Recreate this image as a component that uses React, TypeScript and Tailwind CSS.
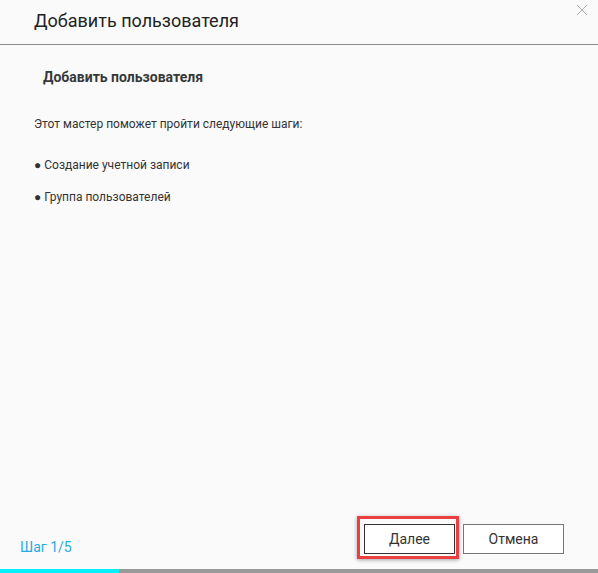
import React from 'react';

const steps = ['Создание учетной записи', 'Группа пользователей'];

const App: React.FC = () => {
  return (
    <div
      className="w-[598px] h-[573px] bg-[#fafafa] flex flex-col text-[#333] overflow-hidden"
      style={{ fontFamily: 'Roboto, "Liberation Sans", sans-serif' }}
    >
      <div className="relative h-[45px] border-b border-[#8c8c8c] flex items-center pl-[34px] shrink-0">
        <h1 className="text-[18px] leading-[24px] text-[#222] font-normal mt-[-2px]">Добавить пользователя</h1>
        <button className="absolute right-[10px] top-[4px] w-[12px] h-[12px] text-[#b0b0b0]">
          <svg viewBox="0 0 12 12" className="w-[12px] h-[12px]" fill="none" stroke="currentColor" strokeWidth="1">
            <path d="M1 1 L11 11 M11 1 L1 11" />
          </svg>
        </button>
      </div>

      <div className="flex-1 pt-[23px] pl-[34px]">
        <h2 className="text-[14px] leading-[18px] font-bold text-[#383838] pl-[9px]">Добавить пользователя</h2>
        <p className="text-[12px] leading-[16px] mt-[30px]">Этот мастер поможет пройти следующие шаги:</p>
        <ul className="mt-[25px] flex flex-col gap-[16px] text-[12px] leading-[16px]">
          {steps.map((s) => (
            <li key={s}>● {s}</li>
          ))}
        </ul>
      </div>

      <div className="flex items-end pl-[20px] pr-[34px] pb-[15px] shrink-0">
        <span className="text-[14px] leading-[20px] text-[#27acdf] mb-[-3px]">Шаг 1/5</span>
        <div className="ml-auto flex gap-[8px]">
          <div className="relative">
            <div className="absolute left-[-7px] right-[-4px] top-[-8px] bottom-[-5px] border-[3px] border-[#ec4040] shadow-[0_1px_4px_rgba(0,0,0,0.35)]" />
            <button className="relative w-[91px] h-[30px] border border-[#333] bg-white text-[14px] text-[#333]">Далее</button>
          </div>
          <button className="w-[101px] h-[30px] border border-[#777] bg-white text-[14px] text-[#333]">Отмена</button>
        </div>
      </div>

      <div className="h-[4px] bg-[#999] flex shrink-0">
        <div className="w-[119px] bg-[#00f0ff]" />
      </div>
    </div>
  );
};

export default App;
